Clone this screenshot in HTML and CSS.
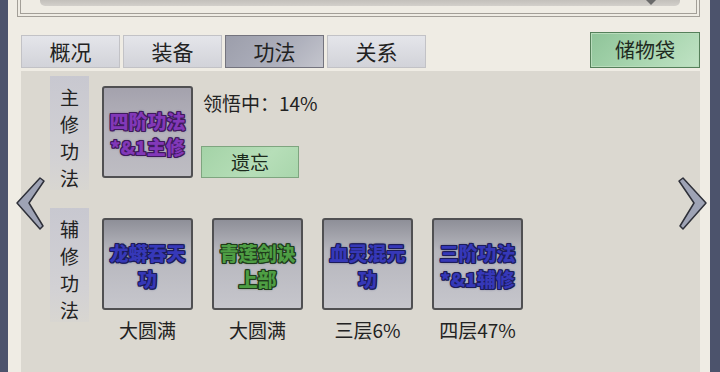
FILE: index.html
```html
<!DOCTYPE html>
<html lang="zh-CN">
<head>
  <meta charset="UTF-8">
  <title>功法</title>
  <link rel="stylesheet" href="styles.css">
</head>
<body>

<div class="screen">

  <!-- top frame (bottom of the header box) -->
  <div class="top-frame">
    <div class="top-bar"><span class="top-mark"></span></div>
  </div>

  <!-- tabs -->
  <div class="tab-row">
    <div class="tabs">
      <div class="tab">概况</div>
      <div class="tab">装备</div>
      <div class="tab active">功法</div>
      <div class="tab">关系</div>
    </div>
    <div class="bag-btn">储物袋</div>
  </div>

  <!-- skill panel -->
  <div class="panel">
    <div class="section">
      <div class="label-col"><span>主</span><span>修</span><span>功</span><span>法</span></div>
      <div class="card card-main"><span class="purple">四阶功法<br>*&amp;1主修</span></div>
      <div class="info">
        <div class="progress">领悟中：14%</div>
        <div class="forget-btn">遗忘</div>
      </div>
    </div>

    <div class="section aux">
      <div class="label-col"><span>辅</span><span>修</span><span>功</span><span>法</span></div>
      <div class="card-list">
        <div class="item">
          <div class="card"><span class="blue">龙蟒吞天<br>功</span></div>
          <div class="level">大圆满</div>
        </div>
        <div class="item">
          <div class="card"><span class="green">青莲剑诀<br>上部</span></div>
          <div class="level">大圆满</div>
        </div>
        <div class="item">
          <div class="card"><span class="blue">血灵混元<br>功</span></div>
          <div class="level">三层6%</div>
        </div>
        <div class="item">
          <div class="card"><span class="blue">三阶功法<br>*&amp;1辅修</span></div>
          <div class="level">四层47%</div>
        </div>
      </div>
    </div>
  </div>

  <!-- page arrows -->
  <svg class="arrow arrow-left" width="34" height="56" viewBox="0 0 34 56">
    <polygon points="27,2 31,5 16,27 30,50 27,53 4,27" />
  </svg>
  <svg class="arrow arrow-right" width="34" height="56" viewBox="0 0 34 56">
    <polygon points="7,2 3,5 18,27 4,50 7,53 30,27" />
  </svg>

</div>

</body>
</html>
```

FILE: styles.css
```css
html, body {
  margin: 0;
  padding: 0;
  width: 720px;
  height: 372px;
  overflow: hidden;
  background-color: #4c536c;
  font-family: "Noto Sans CJK SC", "Noto Sans", sans-serif;
  color: #222;
}

.screen {
  position: relative;
  margin-left: 8px;
  width: 702px;
  height: 372px;
  box-sizing: border-box;
  padding: 0 10px 0 13px;
  background: #efece4;
}

/* top frame */
.top-frame {
  margin-left: -4px;
  height: 17px;
  box-sizing: border-box;
  border: 4px double #a39f98;
  border-top: none;
}

.top-bar {
  position: relative;
  margin: 0 16px 0 19px;
  height: 6px;
  background: linear-gradient(#c3c0bb, #d3d0cb);
  border-radius: 0 0 5px 5px;
}

.top-mark {
  position: absolute;
  left: 606px;
  top: 0;
  width: 0;
  height: 0;
  border-left: 5px solid transparent;
  border-right: 5px solid transparent;
  border-top: 5px solid #6a6a6a;
}

/* tabs */
.tab-row {
  display: flex;
  align-items: flex-end;
  margin-top: 15px;
  height: 36px;
}

.tabs {
  display: flex;
  gap: 3px;
}

.tab {
  width: 99px;
  height: 33px;
  box-sizing: border-box;
  border: 1px solid #c2c2c6;
  background: linear-gradient(#e4e5ea, #d2d3d9);
  font-size: 21px;
  line-height: 31px;
  text-align: center;
}

.tab.active {
  border-color: #74747e;
  background: linear-gradient(135deg, #9c9eab, #aeb0bc 60%, #c4c5cd);
}

.bag-btn {
  margin-left: auto;
  width: 110px;
  height: 36px;
  box-sizing: border-box;
  border: 1px solid #55805a;
  box-shadow: inset 0 0 0 1px #b9dcbc;
  background: linear-gradient(135deg, #8fc499, #a9d6b0 55%, #c0e2c4);
  font-size: 20px;
  line-height: 34px;
  text-align: center;
  color: #1e2a1f;
}

/* panel */
.panel {
  margin-top: 3px;
  height: 301px;
  box-sizing: border-box;
  padding: 5px 0 0 29px;
  background: #dbd8d0;
}

.section {
  display: flex;
  align-items: flex-start;
  height: 114px;
}

.section.aux {
  margin-top: 18px;
}

.label-col {
  width: 39px;
  height: 114px;
  box-sizing: border-box;
  padding-top: 7px;
  display: flex;
  flex-direction: column;
  align-items: center;
  background: linear-gradient(#c8c8d0, #d2d1d4 70%, #d8d6d1);
  font-size: 19px;
  line-height: 27px;
  color: #222;
}

.card {
  width: 91px;
  height: 92px;
  box-sizing: border-box;
  border: 2px solid #505052;
  border-radius: 3px;
  background: linear-gradient(#8e8f98, #b6b6bd 35%, #c6c6cc);
  display: flex;
  align-items: center;
  justify-content: center;
  text-align: center;
  font-size: 19px;
  font-weight: 900;
  line-height: 26px;
  padding-top: 4px;
}

.section > .card {
  margin: 10px 0 0 13px;
}

.card-main {
  background: linear-gradient(#a4a2ad, #b3b1ba 40%, #bebdc3);
}

.purple {
  color: #8238b8;
  text-shadow: 1px 0 #3e1a5c, -1px 0 #3e1a5c, 0 1px #3e1a5c, 0 -1px #3e1a5c,
    1px 1px #3e1a5c, -1px -1px #3e1a5c, 1px -1px #3e1a5c, -1px 1px #3e1a5c,
    0 0 3px #3e1a5c;
}

.blue {
  color: #3638b8;
  text-shadow: 1px 0 #1c1c5a, -1px 0 #1c1c5a, 0 1px #1c1c5a, 0 -1px #1c1c5a,
    1px 1px #1c1c5a, -1px -1px #1c1c5a, 1px -1px #1c1c5a, -1px 1px #1c1c5a,
    0 0 3px #1c1c5a;
}

.green {
  color: #4e9e44;
  text-shadow: 1px 0 #1f3b1b, -1px 0 #1f3b1b, 0 1px #1f3b1b, 0 -1px #1f3b1b,
    1px 1px #1f3b1b, -1px -1px #1f3b1b, 1px -1px #1f3b1b, -1px 1px #1f3b1b,
    0 0 3px #1f3b1b;
}

.info {
  margin: 15px 0 0 8px;
}

.progress {
  padding-left: 2px;
  font-size: 19px;
  line-height: 24px;
}

.forget-btn {
  margin-top: 31px;
  width: 98px;
  height: 32px;
  box-sizing: border-box;
  border: 1px solid #7ea57f;
  background: linear-gradient(135deg, #a4d3a7, #b6deb8 60%, #a9d6ac);
  font-size: 19px;
  line-height: 30px;
  text-align: center;
  color: #1c2a1c;
}

.card-list {
  display: flex;
  gap: 19px;
  margin: 10px 0 0 13px;
}

.item {
  display: flex;
  flex-direction: column;
  align-items: center;
}

.level {
  margin-top: 8px;
  font-size: 19px;
  line-height: 24px;
}

/* arrows */
.arrow {
  position: absolute;
  top: 176px;
}

.arrow polygon {
  fill: #9ea3b5;
  stroke: #2e3039;
  stroke-width: 1.5;
  stroke-linejoin: round;
}

.arrow-left {
  left: 5px;
}

.arrow-right {
  left: 668px;
}
```
